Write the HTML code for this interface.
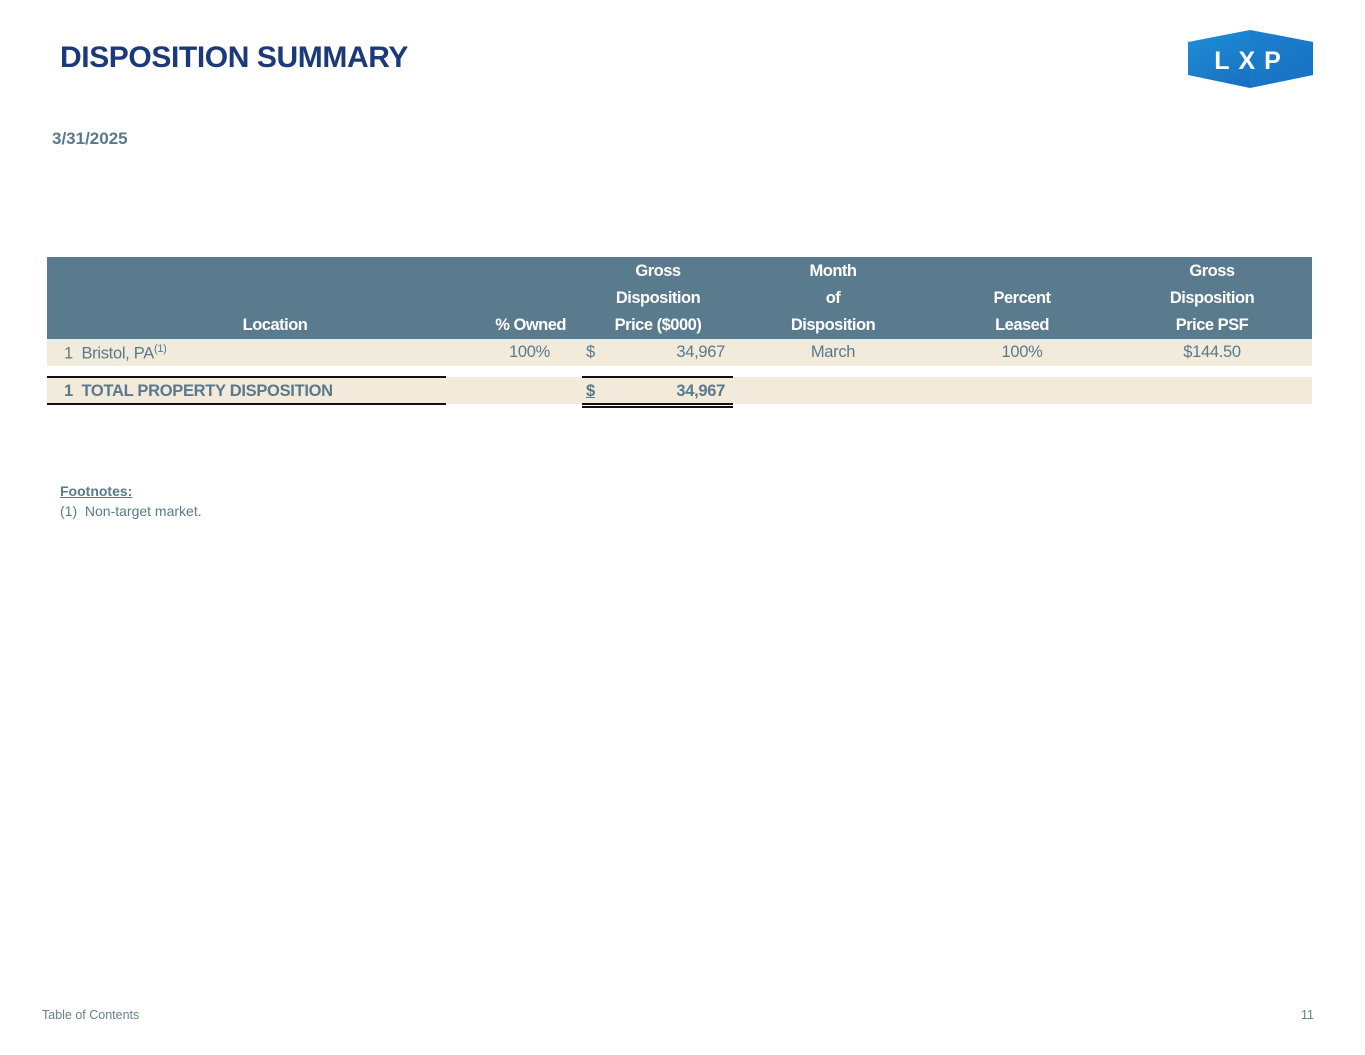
<!DOCTYPE html>
<html><head><meta charset="utf-8"><style>
body{margin:0;width:1365px;height:1055px;background:#fff;position:relative;font-family:"Liberation Sans",sans-serif;overflow:hidden}
.a{position:absolute;white-space:nowrap}
.t{color:#5a7a8c;font-size:16.5px;letter-spacing:-0.3px}
.h{color:#fff;font-weight:bold;font-size:16.5px;letter-spacing:-0.5px;text-align:center;line-height:27px}
</style></head><body>
<div class="a" style="left:60px;top:41px;font-size:30px;font-weight:bold;color:#1c3a7a;letter-spacing:-0.4px">DISPOSITION SUMMARY</div>
<svg class="a" style="left:1188px;top:29px" width="126" height="60" viewBox="0 0 126 60">
<defs><linearGradient id="g" x1="0" y1="0" x2="1" y2="1"><stop offset="0" stop-color="#1f8fd8"/><stop offset="1" stop-color="#1565b8"/></linearGradient></defs>
<polygon points="0,13 62,1 125,13 125,46 62,59 0,46" fill="url(#g)"/>
<polygon points="62,1 125,13 125,46 62,59" fill="#1a7ccc" opacity="0.5"/>
<text x="64" y="40" text-anchor="middle" fill="#fff" font-family="Liberation Sans" font-weight="bold" font-size="25" letter-spacing="9">LXP</text>
</svg>
<div class="a" style="left:52px;top:129px;font-size:17px;font-weight:bold;color:#5a7a8c">3/31/2025</div>

<div class="a" style="left:47px;top:257px;width:1265px;height:82px;background:#5a7b8e"></div>
<div class="a h" style="left:200px;top:312px;width:150px">Location</div>
<div class="a h" style="left:456px;top:312px;width:110px;text-align:right">% Owned</div>
<div class="a h" style="left:583px;top:258px;width:150px">Gross<br>Disposition<br>Price ($000)</div>
<div class="a h" style="left:758px;top:258px;width:150px">Month<br>of<br>Disposition</div>
<div class="a h" style="left:947px;top:285px;width:150px">Percent<br>Leased</div>
<div class="a h" style="left:1137px;top:258px;width:150px">Gross<br>Disposition<br>Price PSF</div>

<div class="a" style="left:47px;top:339px;width:1265px;height:27px;background:#f2eadb"></div>
<div class="a t" style="left:64px;top:343px">1&nbsp; Bristol, PA<sup style="font-size:11px">(1)</sup></div>
<div class="a t" style="left:500px;top:343px;width:50px;text-align:right">100%</div>
<div class="a t" style="left:586px;top:343px">$</div>
<div class="a t" style="left:640px;top:343px;width:85px;text-align:right">34,967</div>
<div class="a t" style="left:758px;top:343px;width:150px;text-align:center">March</div>
<div class="a t" style="left:947px;top:343px;width:150px;text-align:center">100%</div>
<div class="a t" style="left:1137px;top:343px;width:150px;text-align:center">$144.50</div>

<div class="a" style="left:47px;top:377px;width:1265px;height:27px;background:#f2eadb"></div>
<div class="a" style="left:47px;top:376px;width:399px;height:2px;background:#111"></div>
<div class="a" style="left:47px;top:403px;width:399px;height:2px;background:#111"></div>
<div class="a" style="left:582px;top:376px;width:151px;height:2px;background:#111"></div>
<div class="a" style="left:582px;top:403px;width:151px;height:1.5px;background:#111"></div>
<div class="a" style="left:582px;top:406px;width:151px;height:1.5px;background:#111"></div>
<div class="a t" style="left:64px;top:382px;font-weight:bold">1&nbsp; TOTAL PROPERTY DISPOSITION</div>
<div class="a t" style="left:586px;top:382px;font-weight:bold;text-decoration:underline">$</div>
<div class="a t" style="left:640px;top:382px;width:85px;text-align:right;font-weight:bold">34,967</div>

<div class="a" style="left:60px;top:483px;font-size:14px;font-weight:bold;color:#5a7a8c;text-decoration:underline">Footnotes:</div>
<div class="a" style="left:60px;top:503px;font-size:14px;color:#5a7a8c">(1)&nbsp; Non-target market.</div>

<div class="a" style="left:42px;top:1008px;font-size:12.5px;color:#6b7f8c">Table of Contents</div>
<div class="a" style="left:1290px;top:1008px;width:24px;text-align:right;font-size:12.5px;color:#6b7f8c">11</div>
</body></html>
